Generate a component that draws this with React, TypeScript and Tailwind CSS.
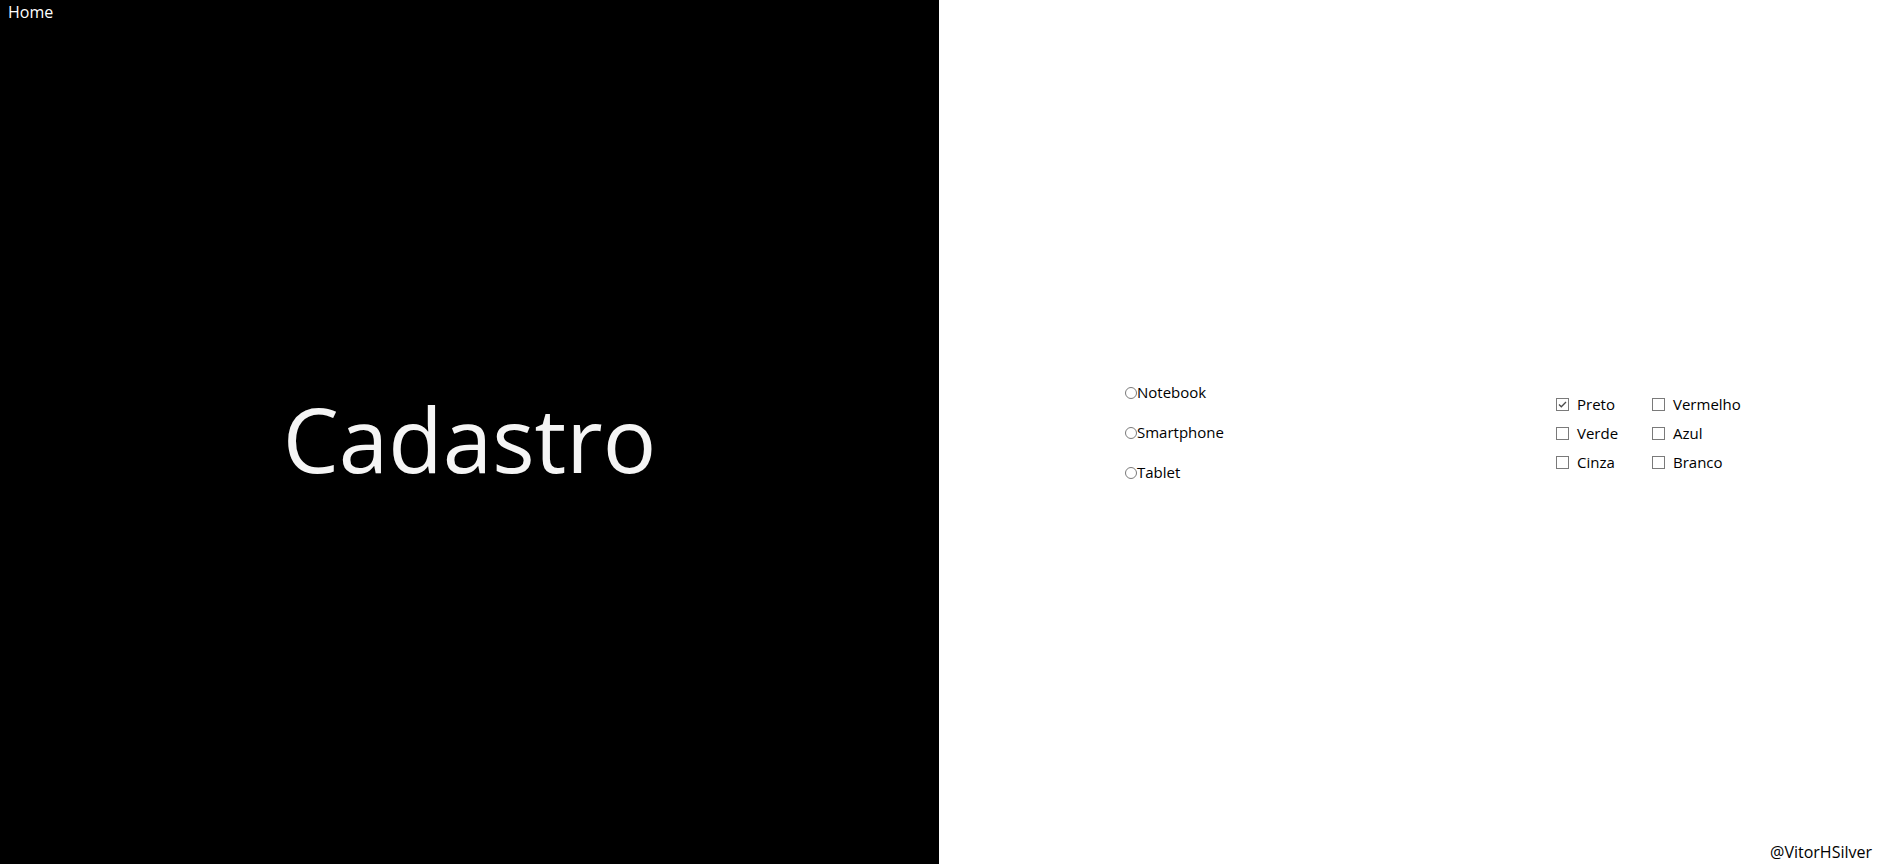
import React, { useState } from 'react';

const font = { fontFamily: '"Segoe UI", "Open Sans", "Noto Sans", sans-serif' };

const radios = ['Notebook', 'Smartphone', 'Tablet'];
const colors = [
  ['Preto', 'Vermelho'],
  ['Verde', 'Azul'],
  ['Cinza', 'Branco'],
];

const Box = ({ checked }: { checked: boolean }) => (
  <span className="w-[13px] h-[13px] border border-[#7a7a7a] bg-white flex items-center justify-center shrink-0">
    {checked && (
      <svg width="11" height="11" viewBox="0 0 11 11">
        <path d="M2 5.5 L4.3 7.8 L9 3" fill="none" stroke="#4a4a4a" strokeWidth="1.3" />
      </svg>
    )}
  </span>
);

export default function App() {
  const [device, setDevice] = useState<string | null>(null);
  const [picked, setPicked] = useState<string[]>(['Preto']);

  const toggle = (c: string) =>
    setPicked(p => (p.includes(c) ? p.filter(x => x !== c) : [...p, c]));

  return (
    <div className="flex w-full h-[864px] text-[16px]" style={font}>
      <div className="w-1/2 h-full bg-black flex flex-col">
        <div className="pl-[8px] pt-[1px] text-white leading-[22px]">Home</div>
        <div className="flex-1 flex items-center justify-center pb-[10px]">
          <h1 className="text-[#f5f5f5] text-[89px] font-normal leading-none">Cadastro</h1>
        </div>
      </div>

      <div className="w-1/2 h-full bg-white flex flex-col">
        <div className="flex-1 flex items-center mt-[22px] text-[15px]">
          <div className="ml-[186px] w-[431px] flex flex-col gap-[18px] pt-[2px]">
            {radios.map(r => (
              <label key={r} className="flex items-center h-[22px] text-black cursor-pointer" onClick={() => setDevice(r)}>
                <span className="w-[12px] h-[12px] rounded-full border border-[#7a7a7a] flex items-center justify-center">
                  {device === r && <span className="w-[6px] h-[6px] rounded-full bg-[#333]" />}
                </span>
                <span>{r}</span>
              </label>
            ))}
          </div>
          <div className="flex flex-col pt-[4px]">
            {colors.map(row => (
              <div key={row[0]} className="flex h-[29px] items-center">
                {row.map(c => (
                  <label key={c} className="w-[96px] flex items-center gap-[8px] text-black cursor-pointer" onClick={() => toggle(c)}>
                    <Box checked={picked.includes(c)} />
                    <span>{c}</span>
                  </label>
                ))}
              </div>
            ))}
          </div>
        </div>
        <div className="self-end pr-[6px] pb-[1px] leading-[22px] text-black">@VitorHSilver</div>
      </div>
    </div>
  );
}
